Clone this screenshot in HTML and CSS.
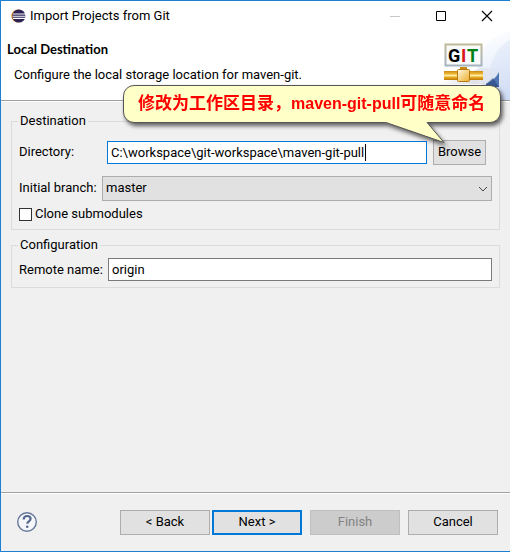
FILE: index.html
```html
<!DOCTYPE html>
<html lang="en">
<head>
<meta charset="utf-8">
<title>Import Projects from Git</title>
<link rel="stylesheet" href="styles.css">
</head>
<body>
<main class="dialog">
  <header class="titlebar">
    <svg class="app-icon" width="16" height="16" viewBox="0 0 16 16" aria-hidden="true">
      <circle cx="7.800" cy="8" r="6.500" fill="#f7941e"/>
      <circle cx="8.800" cy="8" r="6.600" fill="#2c2255"/>
      <path d="M3 6h12M2.500 8.200h13M3 10.400h12" stroke="#fff" stroke-width="1.100"/>
    </svg>
    <span class="window-title">Import Projects from Git</span>
    <button class="window-button" aria-label="Minimize" disabled><svg width="12" height="12"><path d="M1 6.500h10" stroke="#c8c8c8"/></svg></button>
    <button class="window-button" aria-label="Maximize"><svg width="12" height="12"><path d="M1.500 1.500h9v9h-9z" fill="none" stroke="#000"/></svg></button>
    <button class="window-button" aria-label="Close"><svg width="12" height="12"><path d="M1 1l10 10M11 1L1 11" stroke="#000" stroke-width="1.100"/></svg></button>
  </header>

  <section class="banner">
    <div class="banner-text">
      <h1>Local Destination</h1>
      <p>Configure the local storage location for maven-git.</p>
    </div>
    <svg class="banner-art" width="75" height="70" viewBox="0 0 75 70" aria-hidden="true">
      <defs>
        <linearGradient id="sky" gradientUnits="userSpaceOnUse" x1="45" y1="5" x2="75" y2="70"><stop offset="0" stop-color="#fff"/><stop offset=".4" stop-color="#eef3fc"/><stop offset="1" stop-color="#d0dcf6"/></linearGradient>
        <linearGradient id="haze"><stop offset="0" stop-color="#fff"/><stop offset=".5" stop-color="#dfe1e6"/><stop offset="1" stop-color="#dfe5f2" stop-opacity="0"/></linearGradient>
        <linearGradient id="gold" x1="0" y1="0" x2="0" y2="1"><stop offset="0" stop-color="#c98a10"/><stop offset=".35" stop-color="#f2bd3d"/><stop offset=".5" stop-color="#fff0a8"/><stop offset=".7" stop-color="#e9a91f"/><stop offset="1" stop-color="#b97908"/></linearGradient>
        <linearGradient id="plug" x1="0" y1="0" x2="1" y2="1"><stop offset="0" stop-color="#fff9df"/><stop offset="1" stop-color="#ecad2c"/></linearGradient>
        <linearGradient id="frame" x1="0" y1="0" x2="0" y2="1"><stop offset="0" stop-color="#c1ba98"/><stop offset="1" stop-color="#a5b3bf"/></linearGradient>
      </defs>
      <path d="M40 32C48 14 59 4 75 1v69H52z" fill="url(#sky)"/>
      <path d="M54 42C58 24 66 14 75 10v60H60z" fill="#c9d8f5" opacity=".25"/>
      <path d="M4 54L46 38H75V54z" fill="url(#haze)"/>
      <path d="M51 54Q60 50 64 42V57H51z" fill="#4f76b3"/>
      <path d="M51 54L58 48 64 57H51z" fill="#24457f" opacity=".6"/>
      <rect x="10.500" y="14.500" width="36" height="21" fill="#f8fafc" stroke="url(#frame)" stroke-width="2"/>
      <g class="logo-text"><text x="13" y="32" fill="#000">G</text><text x="26" y="32" fill="#d8141e">I</text><text x="32" y="32" fill="#008013">T</text></g>
      <rect x="9" y="41" width="39" height="9" fill="url(#gold)"/>
      <rect x="25" y="37" width="7" height="4" fill="#ca8b13"/>
      <rect x="22.500" y="39.500" width="12" height="12" rx="1" fill="url(#plug)" stroke="#b8780f"/>
    </svg>
  </section>

  <form class="content">
    <fieldset class="destination">
      <legend>Destination</legend>
      <div class="row directory-row">
        <label class="directory-label" for="directory">Directory:</label>
        <span class="directory-box"><input id="directory" type="text" value="C:\workspace\git-workspace\maven-git-pull"><span class="caret"></span></span>
        <button class="button browse" type="button">Browse</button>
      </div>
      <div class="row branch-row">
        <label class="branch-label" for="branch">Initial branch:</label>
        <span class="select-wrap">
          <select id="branch"><option>master</option></select>
          <svg class="chevron" width="10" height="6" aria-hidden="true"><path d="M1 1l4 4 4-4" fill="none" stroke="#444"/></svg>
        </span>
      </div>
      <label class="check-row"><input type="checkbox">Clone submodules</label>
    </fieldset>
    <fieldset class="configuration">
      <legend>Configuration</legend>
      <div class="row remote-row">
        <label class="remote-label" for="remote">Remote name:</label>
        <input id="remote" type="text" value="origin">
      </div>
    </fieldset>
  </form>

  <footer class="actions">
    <button class="help" aria-label="Help">
      <svg width="22" height="22" viewBox="0 0 22 22"><circle cx="11" cy="11" r="9.300" fill="#f5f6f9" stroke="#66779a" stroke-width="1.400"/><path d="M7.600 8.500C7.800 5.800 9.400 5 11.200 5c2 0 3.400 1.100 3.400 2.800 0 2.600-3.300 2.500-3.300 5" fill="none" stroke="#56688e" stroke-width="2.200"/><circle cx="11.200" cy="15.700" r="1.300" fill="#56688e"/></svg>
    </button>
    <button class="button">&lt; Back</button>
    <button class="button primary">Next &gt;</button>
    <button class="button finish" disabled>Finish</button>
    <button class="button cancel">Cancel</button>
  </footer>

  <aside class="callout" lang="zh-CN">修改为工作区目录，<span class="latin">maven-git-pull</span>可随意命名
    <svg class="tail" width="64" height="23" viewBox="0 0 64 23" aria-hidden="true"><path d="M0 0L2 1.500 60 21.500 43 1.500V0z" fill="#ffffc8"/><path d="M2 1.500L60 21.500 43 1.500" fill="none" stroke="#555"/></svg>
  </aside>
</main>
</body>
</html>
```
FILE: styles.css
```css
* { box-sizing: border-box; }

body {
  margin: 0;
  font: 13px/18px Roboto, "Noto Sans", sans-serif;
  color: #000;
}

button, input, select { font: inherit; color: inherit; }

.dialog {
  position: relative;
  display: flex;
  flex-direction: column;
  min-height: 100vh;
  background: #f0f0f0;
  border: 1px solid #1b7fd3;
  border-right: 0;
}

.titlebar {
  display: flex;
  align-items: center;
  height: 29px;
  padding-left: 9px;
  background: #fff;
}

.window-title { flex: 1; padding-left: 4px; }

.window-button {
  display: grid;
  place-items: center;
  width: 46px;
  height: 28px;
  padding: 0;
  border: 0;
  background: none;
}

.banner {
  display: flex;
  justify-content: space-between;
  height: 71px;
  background: #fff;
  border-bottom: 1px solid #a0a0a0;
}

.banner-text { padding: 10px 0 0 6px; }

h1 {
  margin: 0;
  font: bold 13px/18px Lato, "Noto Sans", sans-serif;
}

p { margin: 8px 0 0 7px; }

.banner-art { display: block; flex: none; }

.logo-text { font: bold 18px Roboto, "Liberation Sans", sans-serif; }

.content {
  flex: 1;
  padding: 10px 10px 0;
  border-top: 1px solid #fff;
}

fieldset {
  min-width: 0;
  margin: 0;
  padding: 0 7px;
  border: 1px solid #dcdcdc;
}

legend { padding: 0 2px; margin-left: -1px; }

.destination { height: 118px; }

.configuration { height: 52px; margin-top: 6px; }

.row { display: flex; align-items: center; }

.directory-row { height: 26px; margin: 9px 6px 0 0; }

.directory-label { width: 88px; }

.branch-label { width: 83px; }

.remote-label { width: 89px; }

.directory-box {
  position: relative;
  flex: 1;
  display: flex;
  margin-right: 6px;
}

input[type="text"] {
  flex: 1;
  min-width: 0;
  height: 23px;
  padding: 0 3px;
  background: #fff;
  border: 1px solid #7a7a7a;
  border-radius: 0;
}

.directory-box input[type="text"] { border-color: #0078d7; }

.caret {
  position: absolute;
  left: 258px;
  top: 3px;
  width: 1px;
  height: 17px;
  background: #000;
}

.button {
  width: 90px;
  height: 25px;
  padding: 0;
  background: #e1e1e1;
  border: 1px solid #adadad;
}

.browse { width: 53px; }

.branch-row { height: 26px; margin-top: 10px; }

.select-wrap { position: relative; flex: 1; display: flex; }

select {
  flex: 1;
  height: 25px;
  padding: 0 3px;
  appearance: none;
  background: #e1e1e1;
  border: 1px solid #adadad;
  border-radius: 0;
}

.chevron { position: absolute; right: 4px; top: 10px; pointer-events: none; }

.check-row { display: flex; align-items: center; margin-top: 4px; }

input[type="checkbox"] {
  appearance: none;
  width: 13px;
  height: 13px;
  margin: 0 3px 0 0;
  background: #fff;
  border: 1px solid #333;
}

.remote-row { margin-top: 4px; }

.actions {
  display: flex;
  align-items: center;
  height: 59px;
  padding: 0 12px 0 15px;
  border-top: 1px solid #a0a0a0;
  box-shadow: inset 0 1px #fff;
}

.actions .button { margin-right: 2px; }

.actions .primary { border: 2px solid #0078d7; margin-right: 8px; }

.actions .finish {
  color: #838383;
  background: #ccc;
  border-color: #bfbfbf;
  margin-right: 8px;
}

.actions .cancel { margin-right: 0; }

.help {
  display: block;
  width: 22px;
  height: 22px;
  margin-right: auto;
  padding: 0;
  border: 0;
  background: none;
}

.callout {
  position: absolute;
  top: 84px;
  left: 122px;
  right: 9px;
  height: 38px;
  padding-left: 14px;
  font: bold 17px/36px "Liberation Sans", "Noto Sans CJK SC", sans-serif;
  white-space: nowrap;
  color: #f00;
  background: #ffffc8;
  border: 1px solid #555;
  border-radius: 11px;
  filter: drop-shadow(2px 3px 2px rgba(0, 0, 0, .6));
}

.latin { font-size: 16px; }

.tail { position: absolute; right: 52px; top: 35px; }
```
